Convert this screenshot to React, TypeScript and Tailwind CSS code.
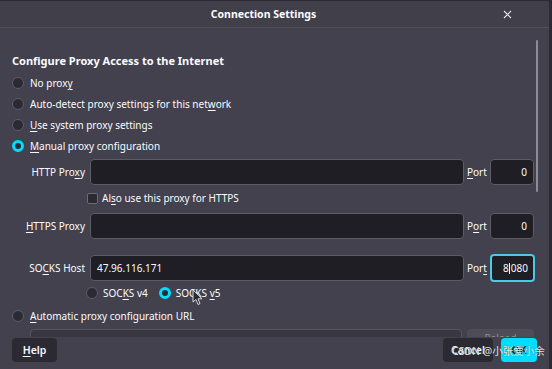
import React from "react"

const font = "font-['Noto_Sans',sans-serif]"

function Radio({ checked = false }: { checked?: boolean }) {
  if (checked) {
    return <span className="block w-[12px] h-[12px] rounded-full border-[3px] border-[#00ddff] bg-[#2b2a33] shrink-0" />
  }
  return <span className="block w-[12px] h-[12px] rounded-full border border-[#5e5d67] bg-[#2b2a33] shrink-0" />
}

function U({ children }: { children: React.ReactNode }) {
  return <span className="underline underline-offset-2 decoration-1">{children}</span>
}

function RadioRow({ checked, children }: { checked?: boolean; children: React.ReactNode }) {
  return (
    <div className="flex items-center gap-[6px] h-[21px]">
      <Radio checked={checked} />
      <span>{children}</span>
    </div>
  )
}

function ProxyRow({
  label,
  value,
  port,
  portLabel,
  focused = false,
}: {
  label: React.ReactNode
  value?: string
  port: React.ReactNode
  portLabel: React.ReactNode
  focused?: boolean
}) {
  return (
    <div className="flex items-center h-[26px]">
      <div className="w-[74px] text-right pr-[1px]">{label}</div>
      <div className="ml-[4px] flex-1 h-[26px] rounded-[4px] border border-[#5d5c66] bg-[#1f1e25] flex items-center px-[6px]">
        {value}
      </div>
      <div className="w-[26px] pl-[3px]">{portLabel}</div>
      <div
        className={
          focused
            ? "w-[45px] h-[28px] -mr-px rounded-[4px] border-2 border-[#4cc9e6] bg-[#1f1e25] flex items-center justify-end pr-[5px]"
            : "w-[44px] h-[26px] rounded-[4px] border border-[#5d5c66] bg-[#1f1e25] flex items-center justify-end pr-[6px]"
        }
      >
        {port}
      </div>
    </div>
  )
}

export default function App() {
  return (
    <div
      className={`${font} relative w-[552px] h-[369px] overflow-hidden bg-[#42414d] text-[#fbfbfe] text-[10px] leading-none flex flex-col border-t border-[#2b2a33] border-r-[3px]`}
    >
      {/* Title bar */}
      <div className="relative h-[27px] shrink-0 flex items-center justify-center pr-[22px] border-b border-[#52515b] bg-[#403f4a]">
        <span className="font-bold text-[10.5px]">Connection Settings</span>
        <svg className="absolute left-[503px] top-[9px]" width="9" height="9" viewBox="0 0 9 9">
          <path d="M1 1L8 8M8 1L1 8" stroke="#e4e4ea" strokeWidth="1.1" />
        </svg>
      </div>

      {/* Scrolling content */}
      <div className="relative h-[309px] shrink-0 overflow-hidden pl-[12px] pr-[15px] pt-[24px]">
        <div className="font-bold text-[11px] h-[16px] flex items-center">Configure Proxy Access to the Internet</div>
        <div className="mt-[4px]">
          <RadioRow>No prox<U>y</U></RadioRow>
          <RadioRow>Auto-detect proxy settings for this net<U>w</U>ork</RadioRow>
          <RadioRow><U>U</U>se system proxy settings</RadioRow>
          <RadioRow checked><U>M</U>anual proxy configuration</RadioRow>
        </div>

        <div className="mt-[3px]">
          <ProxyRow label={<>HTTP Pro<U>x</U>y</>} portLabel={<><U>P</U>ort</>} port="0" />
        </div>

        <div className="h-[26px] flex items-center pl-[75px] gap-[4px]">
          <span className="block w-[11px] h-[11px] rounded-[2px] border border-[#6e6d77] bg-[#2b2a33]" />
          <span>Al<U>s</U>o use this proxy for HTTPS</span>
        </div>

        <div className="mt-[2px]">
          <ProxyRow label={<><U>H</U>TTPS Proxy</>} portLabel={<>P<U>o</U>rt</>} port="0" />
        </div>

        <div className="mt-[16px]">
          <ProxyRow
            label={<>SO<U>C</U>KS Host</>}
            value="47.96.116.171"
            portLabel={<>Por<U>t</U></>}
            port={
              <span className="flex items-center">
                8<span className="block w-px h-[11px] bg-[#fbfbfe] mx-[0.5px]" />080
              </span>
            }
            focused
          />
        </div>

        <div className="h-[24px] flex items-center pl-[74px] gap-[5px]">
          <Radio />
          <span>SOC<U>K</U>S v4</span>
          <span className="ml-[6px] flex items-center gap-[5px]">
            <Radio checked />
            <span>SOCKS <U>v</U>5</span>
          </span>
        </div>

        <RadioRow><U>A</U>utomatic proxy configuration URL</RadioRow>

        <div className="mt-[3px] flex items-start gap-[5px] pl-[18px]">
          <div className="flex-1 h-[26px] rounded-[4px] border border-[#55545e] bg-[#393842]" />
          <div className="w-[67px] h-[26px] rounded-[4px] bg-[#4d4c57] text-[#8f8e98] flex justify-center pt-[4px]">Reload</div>
        </div>

        {/* scrollbar */}
        <div className="absolute left-[536px] top-[12px] w-[2px] h-[152px] rounded-full bg-[#8c8b95]" />
      </div>

      {/* Footer */}
      <div className="flex-1 flex items-start pl-[12px] pr-[12px] pt-[1px]">
        <button className="h-[24px] w-[45px] rounded-[4px] bg-[#2b2a33] font-semibold text-[10.5px]">
          <U>H</U>elp
        </button>
        <div className="flex-1" />
        <button className="h-[24px] w-[50px] rounded-[4px] bg-[#2b2a33] font-semibold text-[10.5px]">Cancel</button>
        <button className="ml-[8px] h-[24px] w-[36px] rounded-[4px] bg-[#00ddff] text-[#15141a] font-semibold text-[10.5px]">OK</button>
      </div>

      {/* watermark */}
      <div className="absolute left-[452px] top-[345px] whitespace-nowrap text-[10.5px] leading-none text-white/90 font-['Noto_Sans','Noto_Sans_CJK_SC',sans-serif] [text-shadow:0_0_1px_rgba(0,0,0,0.6)]">
        CSDN @小张爱小余
      </div>

      {/* mouse pointer */}
      <svg className="absolute left-[192px] top-[288px]" width="11" height="17" viewBox="0 0 11 17">
        <path d="M1 1L1 13L4 10.5L6 15.5L8 14.6L6 9.8L10 9.8Z" fill="#2b2a33" stroke="#d8d8de" strokeWidth="1" strokeLinejoin="round" />
      </svg>
    </div>
  )
}
